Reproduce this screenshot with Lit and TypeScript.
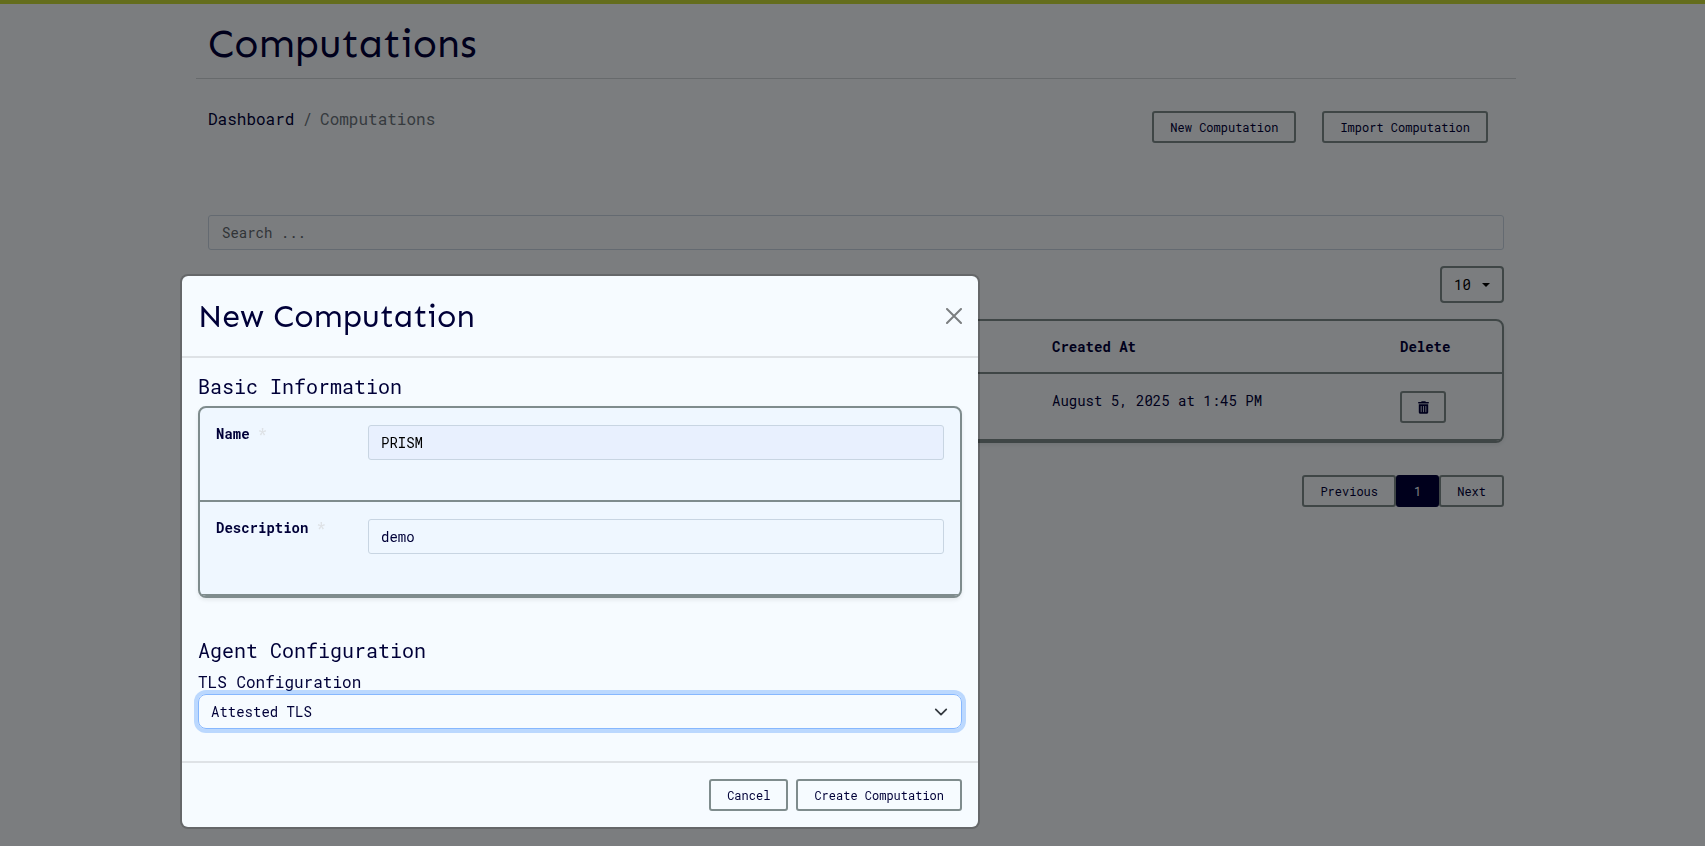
import { LitElement, html, css } from "lit";
import { customElement, state } from "lit/decorators.js";

const base = css`
  :host {
    --ink: #000038;
    --line: #7f8c8d;
    --paper: #f6fbff;
    --field-line: #c8d5e2;
    --rule: #dee2e6;
    color: var(--ink);
    font: 14px/21px "Roboto Mono", "DejaVu Sans Mono", "Liberation Mono", monospace;
  }
  *,
  *::before,
  *::after {
    box-sizing: border-box;
  }
  h1,
  h2,
  h3 {
    margin: 0;
    font-weight: 400;
  }
  input,
  select,
  button {
    margin: 0;
    font: inherit;
    color: inherit;
  }
  .btn {
    height: 32px;
    padding: 0 16px;
    border: 2px solid var(--line);
    border-radius: 3px;
    background: transparent;
    font-size: 12px;
    line-height: 28px;
    white-space: nowrap;
    cursor: pointer;
  }
  .field {
    width: 100%;
    height: 35px;
    padding: 6px 12px;
    border: 1px solid var(--field-line);
    border-radius: 3px;
    background: transparent;
    outline: none;
  }
  .picker {
    display: grid;
    align-items: center;
  }
  .picker select,
  .picker svg {
    grid-area: 1 / 1;
  }
  .picker svg {
    justify-self: end;
    pointer-events: none;
  }
  .picker select {
    appearance: none;
    width: 100%;
    background: transparent;
    outline: none;
  }
  .card {
    border: 2px solid var(--line);
    border-radius: 8px;
    box-shadow: 0 2px 4px rgba(0, 0, 0, 0.08);
    overflow: hidden;
  }
`;

@customElement("computation-list")
class ComputationList extends LitElement {
  static styles = [
    base,
    css`
      :host {
        display: block;
        padding-left: 7px;
        border-top: 4px solid #c8da3a;
      }
      .container {
        max-width: 1320px;
        margin: 0 auto;
      }
      .title {
        padding: 16px 12px 10px;
        border-bottom: 1px solid #cfd4d9;
        font: 400 40px/48px Sen, Inter, sans-serif;
      }
      .content {
        padding: 28px 12px 0;
      }
      .top {
        display: flex;
        justify-content: space-between;
        height: 108px;
      }
      .crumbs {
        display: flex;
        gap: 8px;
        font-size: 16px;
        line-height: 24px;
        color: #6c757d;
      }
      .crumbs a {
        color: var(--ink);
        text-decoration: none;
      }
      .actions {
        display: flex;
        gap: 26px;
        padding: 4px 16px 0 0;
      }
      .search {
        padding: 6px 13px;
      }
      .search::placeholder {
        color: #63696f;
        opacity: 1;
      }
      .limit {
        width: 64px;
        margin: 16px 0 16px auto;
      }
      .limit select {
        height: 37px;
        padding: 0 12px;
        border: 2px solid var(--line);
        border-radius: 4px;
        color: #000;
      }
      .limit svg {
        margin-right: 14px;
      }
      table {
        width: 100%;
        border-collapse: separate;
        border-spacing: 0;
        table-layout: fixed;
      }
      th,
      td {
        padding: 16px;
        border-bottom: 2px solid var(--line);
        text-align: left;
        vertical-align: top;
      }
      th {
        padding: 15px 16px;
      }
      .created {
        width: 348px;
      }
      .delete {
        width: 118px;
      }
      .remove {
        padding-top: 17px;
      }
      .remove .btn {
        display: block;
        width: 46px;
      }
      .remove svg {
        display: block;
        margin: 0 auto;
      }
      .pages {
        display: flex;
        justify-content: flex-end;
        margin-top: 32px;
      }
      .current {
        border-color: var(--ink);
        background: var(--ink);
        color: var(--paper);
      }
    `,
  ];

  render() {
    return html`
      <main class="container">
        <h1 class="title">Computations</h1>
        <div class="content">
          <div class="top">
            <nav class="crumbs" aria-label="Breadcrumb">
              <a href="#">Dashboard</a><span>/</span><span>Computations</span>
            </nav>
            <div class="actions">
              <button class="btn">New Computation</button>
              <button class="btn">Import Computation</button>
            </div>
          </div>
          <input class="field search" type="search" placeholder="Search ..." aria-label="Search" />
          <div class="picker limit">
            <select aria-label="Rows per page">
              <option>10</option>
            </select>
            <svg width="8" height="4" viewBox="0 0 8 4"><path d="M0 0h8L4 4z" fill="#000" /></svg>
          </div>
          <div class="card">
            <table>
              <thead>
                <tr>
                  <th></th>
                  <th class="created">Created At</th>
                  <th class="delete">Delete</th>
                </tr>
              </thead>
              <tbody>
                <tr>
                  <td></td>
                  <td>August 5, 2025 at 1:45 PM</td>
                  <td class="remove">
                    <button class="btn" aria-label="Delete">
                      <svg width="11" height="13" viewBox="0 0 448 512">
                        <path
                          fill="currentColor"
                          d="M135 18C141 7 152 0 164 0h120c12 0 23 7 29 18l7 14h96c18 0 32 14 32 32s-14 32-32 32H32C14 96 0 82 0 64s14-32 32-32h96zM32 128h384v320c0 35-29 64-64 64H96c-35 0-64-29-64-64zm96 64c-9 0-16 7-16 16v224c0 9 7 16 16 16s16-7 16-16V208c0-9-7-16-16-16zm96 0c-9 0-16 7-16 16v224c0 9 7 16 16 16s16-7 16-16V208c0-9-7-16-16-16zm96 0c-9 0-16 7-16 16v224c0 9 7 16 16 16s16-7 16-16V208c0-9-7-16-16-16z"
                        />
                      </svg>
                    </button>
                  </td>
                </tr>
              </tbody>
            </table>
          </div>
          <nav class="pages" aria-label="Pagination">
            <button class="btn">Previous</button>
            <button class="btn current" aria-current="page">1</button>
            <button class="btn">Next</button>
          </nav>
        </div>
      </main>
    `;
  }
}

@customElement("computation-dialog")
class ComputationDialog extends LitElement {
  static styles = [
    base,
    css`
      :host {
        display: block;
        position: fixed;
        inset: 0;
        overflow: auto;
        padding: 274px 0 16px 180px;
        background: rgba(0, 0, 0, 0.5);
      }
      .dialog {
        max-width: 800px;
        border: 2px solid rgba(0, 0, 0, 0.175);
        border-radius: 8px;
        background: var(--paper);
        background-clip: padding-box;
      }
      .head {
        display: flex;
        align-items: center;
        justify-content: space-between;
        padding: 20px 16px;
        border-bottom: 2px solid var(--rule);
      }
      .head h2 {
        font: 400 32px/40px Sen, Inter, sans-serif;
      }
      .close {
        display: block;
        padding: 0;
        border: 0;
        background: none;
        cursor: pointer;
      }
      .close svg {
        display: block;
      }
      .body {
        padding: 16px 16px 32px;
      }
      h3 {
        margin-bottom: 8px;
        font-size: 20px;
        line-height: 24px;
      }
      .card {
        margin-bottom: 40px;
        background: #eff7ff;
      }
      .row {
        display: grid;
        grid-template-columns: 136px 1fr;
        gap: 16px;
        padding: 17px 16px 40px;
        border-bottom: 2px solid var(--line);
      }
      .row label {
        font-weight: 700;
        line-height: 18px;
      }
      .star {
        color: var(--rule);
      }
      .filled {
        border-color: var(--field-line);
        background: #e8f0fe;
        color: #000;
      }
      .tls {
        display: block;
        font-size: 16px;
        line-height: 24px;
      }
      .body .picker select {
        height: 35px;
        padding: 0 12px;
        border: 1px solid #86b7fe;
        border-radius: 8px;
        box-shadow: 0 0 0 4px rgba(13, 110, 253, 0.25);
      }
      .body .picker svg {
        margin-right: 14px;
      }
      .foot {
        display: flex;
        justify-content: flex-end;
        gap: 8px;
        padding: 16px;
        border-top: 2px solid var(--rule);
      }
    `,
  ];

  @state() private name = "PRISM";
  @state() private description = "demo";

  render() {
    return html`
      <form class="dialog" role="dialog" aria-labelledby="heading" @submit=${(e: Event) => e.preventDefault()}>
        <header class="head">
          <h2 id="heading">New Computation</h2>
          <button class="close" type="button" aria-label="Close">
            <svg width="16" height="16" viewBox="0 0 16 16">
              <path d="M1 1l14 14M15 1L1 15" fill="none" stroke="#7b7e80" stroke-width="2" stroke-linecap="round" />
            </svg>
          </button>
        </header>
        <div class="body">
          <h3>Basic Information</h3>
          <div class="card">
            <div class="row">
              <label for="name">Name <span class="star">*</span></label>
              <input class="field filled" id="name" .value=${this.name} />
            </div>
            <div class="row">
              <label for="description">Description <span class="star">*</span></label>
              <input class="field" id="description" .value=${this.description} />
            </div>
          </div>
          <h3>Agent Configuration</h3>
          <label class="tls" for="tls">TLS Configuration</label>
          <div class="picker">
            <select id="tls">
              <option>Attested TLS</option>
            </select>
            <svg width="14" height="14" viewBox="0 0 16 16">
              <path
                d="m2 5 6 6 6-6"
                fill="none"
                stroke="#343a40"
                stroke-width="2"
                stroke-linecap="round"
                stroke-linejoin="round"
              />
            </svg>
          </div>
        </div>
        <footer class="foot">
          <button class="btn" type="button">Cancel</button>
          <button class="btn" type="submit">Create Computation</button>
        </footer>
      </form>
    `;
  }
}

@customElement("app-root")
class AppRoot extends LitElement {
  static styles = css`
    :host {
      display: block;
      min-height: 100vh;
      background: #f6fbff;
    }
  `;

  render() {
    return html`
      <computation-list></computation-list>
      <computation-dialog></computation-dialog>
    `;
  }
}
